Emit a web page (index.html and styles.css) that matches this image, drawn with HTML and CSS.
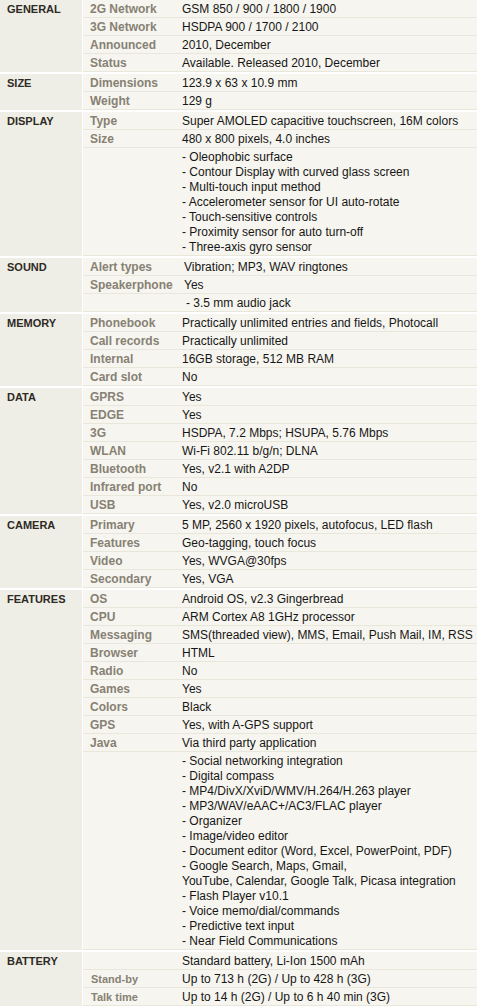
FILE: index.html
```html
<!DOCTYPE html>
<html>
<head>
<meta charset="utf-8">
<link rel="stylesheet" href="styles.css">
</head>
<body>
<table class="specs">
<colgroup><col class="c-cat"><col class="c-lab"><col class="c-val"></colgroup>
<tbody>
<tr><th class="cat" rowspan="4">GENERAL</th><td class="lab">2G Network</td><td class="val">GSM 850 / 900 / 1800 / 1900</td></tr>
<tr><td class="lab">3G Network</td><td class="val">HSDPA 900 / 1700 / 2100</td></tr>
<tr><td class="lab">Announced</td><td class="val">2010, December</td></tr>
<tr><td class="lab">Status</td><td class="val">Available. Released 2010, December</td></tr>
</tbody>
<tbody class="sec">
<tr><th class="cat" rowspan="2">SIZE</th><td class="lab">Dimensions</td><td class="val">123.9 x 63 x 10.9 mm</td></tr>
<tr><td class="lab">Weight</td><td class="val">129 g</td></tr>
</tbody>
<tbody class="sec">
<tr><th class="cat" rowspan="3">DISPLAY</th><td class="lab">Type</td><td class="val">Super AMOLED capacitive touchscreen, 16M colors</td></tr>
<tr><td class="lab">Size</td><td class="val">480 x 800 pixels, 4.0 inches</td></tr>
<tr class="list"><td class="lab"></td><td class="val">- Oleophobic surface<br>- Contour Display with curved glass screen<br>- Multi-touch input method<br>- Accelerometer sensor for UI auto-rotate<br>- Touch-sensitive controls<br>- Proximity sensor for auto turn-off<br>- Three-axis gyro sensor</td></tr>
</tbody>
<tbody class="sec sound">
<tr><th class="cat" rowspan="3">SOUND</th><td class="lab">Alert types</td><td class="val">Vibration; MP3, WAV ringtones</td></tr>
<tr><td class="lab">Speakerphone</td><td class="val">Yes</td></tr>
<tr><td class="lab"></td><td class="val ind">- 3.5 mm audio jack</td></tr>
</tbody>
<tbody class="sec">
<tr><th class="cat" rowspan="4">MEMORY</th><td class="lab">Phonebook</td><td class="val">Practically unlimited entries and fields, Photocall</td></tr>
<tr><td class="lab">Call records</td><td class="val">Practically unlimited</td></tr>
<tr><td class="lab">Internal</td><td class="val">16GB storage, 512 MB RAM</td></tr>
<tr><td class="lab">Card slot</td><td class="val">No</td></tr>
</tbody>
<tbody class="sec">
<tr><th class="cat" rowspan="7">DATA</th><td class="lab">GPRS</td><td class="val">Yes</td></tr>
<tr><td class="lab">EDGE</td><td class="val">Yes</td></tr>
<tr><td class="lab">3G</td><td class="val">HSDPA, 7.2 Mbps; HSUPA, 5.76 Mbps</td></tr>
<tr><td class="lab">WLAN</td><td class="val">Wi-Fi 802.11 b/g/n; DLNA</td></tr>
<tr><td class="lab">Bluetooth</td><td class="val">Yes, v2.1 with A2DP</td></tr>
<tr><td class="lab">Infrared port</td><td class="val">No</td></tr>
<tr><td class="lab">USB</td><td class="val">Yes, v2.0 microUSB</td></tr>
</tbody>
<tbody class="sec">
<tr><th class="cat" rowspan="4">CAMERA</th><td class="lab">Primary</td><td class="val">5 MP, 2560 x 1920 pixels, autofocus, LED flash</td></tr>
<tr><td class="lab">Features</td><td class="val">Geo-tagging, touch focus</td></tr>
<tr><td class="lab">Video</td><td class="val">Yes, WVGA@30fps</td></tr>
<tr><td class="lab">Secondary</td><td class="val">Yes, VGA</td></tr>
</tbody>
<tbody class="sec">
<tr><th class="cat" rowspan="10">FEATURES</th><td class="lab">OS</td><td class="val">Android OS, v2.3 Gingerbread</td></tr>
<tr><td class="lab">CPU</td><td class="val">ARM Cortex A8 1GHz processor</td></tr>
<tr><td class="lab">Messaging</td><td class="val">SMS(threaded view), MMS, Email, Push Mail, IM, RSS</td></tr>
<tr><td class="lab">Browser</td><td class="val">HTML</td></tr>
<tr><td class="lab">Radio</td><td class="val">No</td></tr>
<tr><td class="lab">Games</td><td class="val">Yes</td></tr>
<tr><td class="lab">Colors</td><td class="val">Black</td></tr>
<tr><td class="lab">GPS</td><td class="val">Yes, with A-GPS support</td></tr>
<tr><td class="lab">Java</td><td class="val">Via third party application</td></tr>
<tr class="list"><td class="lab"></td><td class="val">- Social networking integration<br>- Digital compass<br>- MP4/DivX/XviD/WMV/H.264/H.263 player<br>- MP3/WAV/eAAC+/AC3/FLAC player<br>- Organizer<br>- Image/video editor<br>- Document editor (Word, Excel, PowerPoint, PDF)<br>- Google Search, Maps, Gmail,<br>YouTube, Calendar, Google Talk, Picasa integration<br>- Flash Player v10.1<br>- Voice memo/dial/commands<br>- Predictive text input<br>- Near Field Communications</td></tr>
</tbody>
<tbody class="sec battery">
<tr><th class="cat" rowspan="3">BATTERY</th><td class="lab"></td><td class="val">Standard battery, Li-Ion 1500 mAh</td></tr>
<tr><td class="lab">Stand-by</td><td class="val">Up to 713 h (2G) / Up to 428 h (3G)</td></tr>
<tr><td class="lab">Talk time</td><td class="val">Up to 14 h (2G) / Up to 6 h 40 min (3G)</td></tr>
</tbody>
</table>
</body>
</html>
```

FILE: styles.css
```css
html, body {
  margin: 0;
  padding: 0;
  background: #ffffff;
}

.specs {
  width: 477px;
  table-layout: fixed;
  border-collapse: separate;
  border-spacing: 0;
  font-family: "Liberation Sans", Arial, sans-serif;
  font-size: 12px;
}

.c-cat { width: 83px; }
.c-lab { width: 99px; }
.c-val { width: 295px; }

.specs th,
.specs td {
  padding: 1px 0 0 0;
  line-height: 16px;
  white-space: nowrap;
  text-align: left;
  vertical-align: top;
}

.cat {
  background: #efeee6;
  border-right: 1px solid #ffffff;
  padding-left: 7px !important;
  font-size: 11px;
  font-weight: bold;
  color: #2d2a24;
}

.lab,
.val {
  background: #f6f5ef;
  border-bottom: 1px solid #e9e7da;
}

.lab {
  padding-left: 7px !important;
  font-weight: bold;
  color: #878174;
}

.val {
  color: #161616;
}

.sec tr:first-child th,
.sec tr:first-child td {
  border-top: 2px solid #ffffff;
}

.list td {
  line-height: 15px;
  padding-top: 2px !important;
  padding-bottom: 0 !important;
}

.sound .val {
  padding-left: 2px !important;
}

.sound .val.ind {
  padding-left: 4px !important;
}

.battery .lab {
  padding-left: 8px !important;
  font-size: 11px;
}
```
